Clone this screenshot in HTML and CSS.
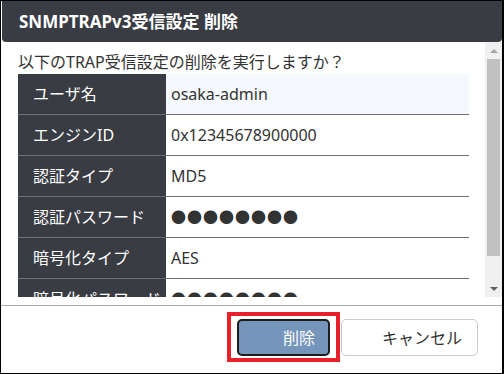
FILE: index.html
```html
<!DOCTYPE html>
<html lang="ja">
<head>
<meta charset="UTF-8">
<title>SNMPTRAPv3受信設定 削除</title>
<link rel="stylesheet" href="styles.css">
</head>
<body>
<div class="dialog">
  <div class="dialog-header">SNMPTRAPv3受信設定 削除</div>

  <div class="dialog-body">
    <div class="body-content">
      <p class="question">以下のTRAP受信設定の削除を実行しますか？</p>
      <table class="detail">
        <tr class="odd"><th>ユーザ名</th><td>osaka-admin</td></tr>
        <tr><th>エンジンID</th><td>0x12345678900000</td></tr>
        <tr><th>認証タイプ</th><td>MD5</td></tr>
        <tr><th>認証パスワード</th><td class="dots">●●●●●●●●</td></tr>
        <tr><th>暗号化タイプ</th><td>AES</td></tr>
        <tr><th>暗号化パスワード</th><td class="dots">●●●●●●●●</td></tr>
      </table>
    </div>
    <div class="scrollbar">
      <div class="sb-arrow up"></div>
      <div class="sb-thumb"></div>
      <div class="sb-space"></div>
      <div class="sb-arrow down"></div>
    </div>
  </div>

  <div class="dialog-footer">
    <span class="highlight">
      <button type="button" class="btn btn-delete">削除</button>
    </span>
    <button type="button" class="btn btn-cancel">キャンセル</button>
  </div>
</div>
</body>
</html>
```

FILE: styles.css
```css
html, body {
margin: 0;
padding: 0;
background: #fff;
}

body {
font-family: "Noto Sans", "Noto Sans CJK JP", sans-serif;
font-size: 16px;
color: #333;
}

.dialog {
width: 501px;
height: 372px;
border: 1px solid #000;
border-right-width: 2px;
display: flex;
flex-direction: column;
background: #fff;
}

.dialog-header {
height: 41px;
margin-left: 1px;
background: #393c43;
border-radius: 0 0 4px 4px;
color: #fff;
font-weight: bold;
font-size: 17px;
line-height: 41px;
padding-left: 17px;
}

/* scroll area, content is cut by the fake scrollbar */
.dialog-body {
height: 255px;
display: flex;
}

.body-content {
flex: 1;
overflow: hidden;
padding: 8px 16px 0 17px;
}

.question {
margin: 0;
line-height: 24px;
height: 24px;
white-space: nowrap;
}

.detail {
width: 451px;
border-collapse: collapse;
}

.detail th,
.detail td {
height: 40px;
padding: 0;
border-bottom: 1px solid #707070;
text-align: left;
font-weight: normal;
line-height: 40px;
white-space: nowrap;
}

.detail th {
width: 148px;
background: #393c43;
color: #fff;
padding-left: 15px;
box-sizing: border-box;
}

.detail td {
padding-left: 5px;
}

.detail tr.odd td {
background: #f5f8fc;
}

.detail td.dots {
font-size: 15px;
letter-spacing: 1px;
}

.scrollbar {
width: 17px;
background: #f0f0f0;
display: flex;
flex-direction: column;
}

.sb-arrow {
height: 17px;
display: flex;
align-items: center;
justify-content: center;
}

.sb-arrow.up::before {
content: "";
border-left: 4px solid transparent;
border-right: 4px solid transparent;
border-bottom: 4px solid #a3a3a3;
}

.sb-arrow.down::before {
content: "";
border-left: 4px solid transparent;
border-right: 4px solid transparent;
border-top: 4px solid #606060;
}

.sb-thumb {
height: 197px;
margin: 0 2px;
background: #c1c1c1;
}

.sb-space {
flex: 1;
}

.dialog-footer {
flex: 1;
margin-top: 8px;
border-top: 1px solid #aaa;
display: flex;
justify-content: flex-end;
align-items: flex-start;
padding: 6px 24px 0 0;
}

/* red marker round the delete button */
.highlight {
display: flex;
padding: 3px 6px 2px 6px;
border: 4px solid #e8202a;
}

.btn {
box-sizing: border-box;
height: 37px;
font-family: inherit;
font-size: 16px;
line-height: 1;
white-space: nowrap;
border-radius: 5px;
cursor: pointer;
}

.btn-delete {
width: 93px;
padding: 0 14px 0 44px;
text-align: left;
background: #7595ba;
color: #fff;
border: 2px solid #1c1c1c;
}

.btn-cancel {
width: 137px;
margin: 7px 0 0 1px;
padding: 0 18px 0 40px;
text-align: left;
background: #fff;
color: #333;
border: 1px solid #ccc;
}
```
